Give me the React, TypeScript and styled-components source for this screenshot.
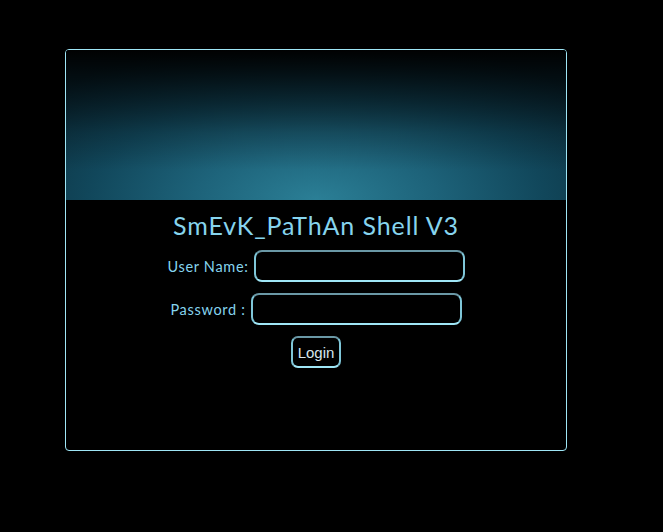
import styled, { createGlobalStyle } from "styled-components";

const Global = createGlobalStyle`
  html, body {
    margin: 0;
    background: #000;
    font-family: "Lato", "DejaVu Sans", sans-serif;
  }
`;

const Card = styled.div`
  box-sizing: border-box;
  margin: 49px 0 0 65px;
  width: 502px;
  height: 402px;
  border: 1px solid #9fe6f6;
  border-radius: 4px;
  overflow: hidden;
  display: flex;
  flex-direction: column;
  align-items: center;
`;

const Banner = styled.div`
  align-self: stretch;
  height: 150px;
  background:
    linear-gradient(to bottom, rgba(0, 0, 0, 0.97) 0%, rgba(0, 0, 0, 0.6) 25%, rgba(0, 0, 0, 0.2) 55%, rgba(0, 0, 0, 0) 80%),
    radial-gradient(ellipse 70% 110% at 50% 100%, #2b7f96 0%, #1d6279 35%, #11475b 65%, #0a2b39 100%);
`;

const Title = styled.h1`
  margin: 10px 0 10px;
  font-size: 25px;
  font-weight: 400;
  letter-spacing: 0.9px;
  color: #86d4ee;
`;

const Form = styled.form`
  display: flex;
  flex-direction: column;
  align-items: center;
  gap: 11px;
`;

const Row = styled.div`
  display: flex;
  align-items: center;
  gap: 5px;
`;

const Label = styled.label`
  font-size: 14.5px;
  letter-spacing: 0.7px;
  color: #86d4ee;
`;

const Input = styled.input`
  box-sizing: border-box;
  width: 211px;
  height: 32px;
  background: #000;
  color: #cfefff;
  border: 2px solid #7fc6d8;
  border-top-color: #6a98a6;
  border-bottom-color: #9fe6f6;
  border-radius: 8px;
  outline: none;
  padding: 0 8px;
`;

const Button = styled.button`
  box-sizing: border-box;
  height: 32px;
  padding: 0 5px;
  background: #000;
  color: #d8e8ee;
  font-family: "Liberation Sans", sans-serif;
  font-size: 15px;
  border: 2px solid #7fc6d8;
  border-top-color: #6a98a6;
  border-bottom-color: #9fe6f6;
  border-radius: 7px;
  cursor: pointer;
`;

export default function App() {
  return (
    <>
      <Global />
      <Card>
        <Banner />
        <Title>SmEvK_PaThAn Shell V3</Title>
        <Form>
          <Row>
            <Label>User Name:</Label>
            <Input type="text" name="user" />
          </Row>
          <Row>
            <Label>Password :</Label>
            <Input type="password" name="pass" />
          </Row>
          <Button type="submit">Login</Button>
        </Form>
      </Card>
    </>
  );
}
